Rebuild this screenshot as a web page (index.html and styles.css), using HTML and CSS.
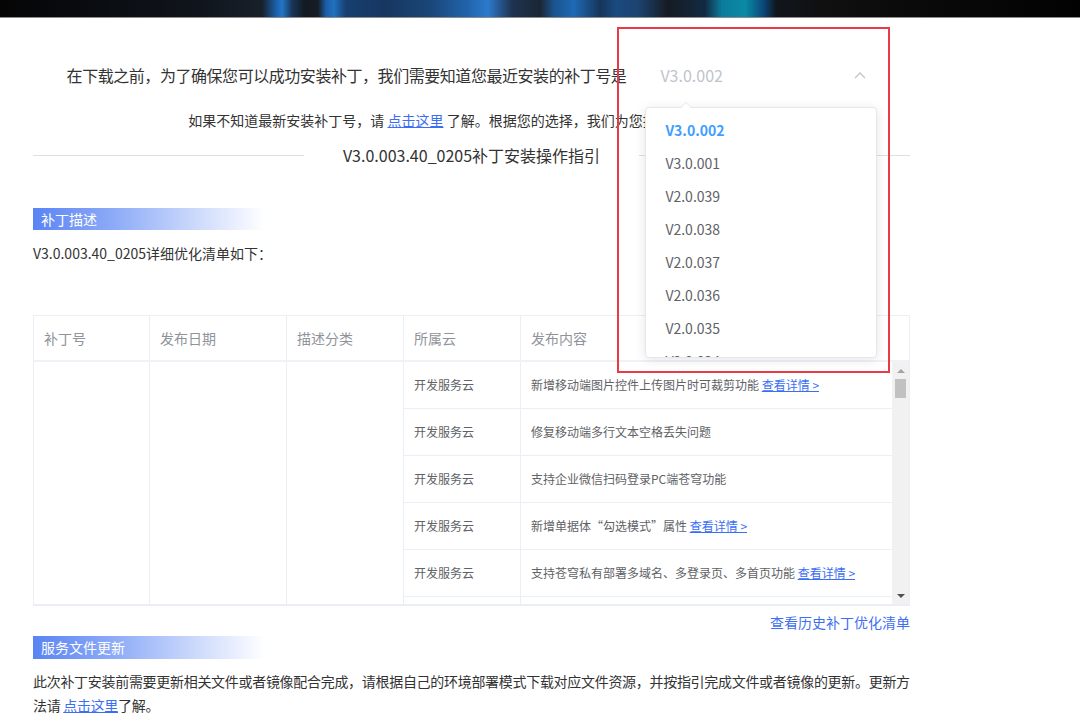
FILE: index.html
```html
<!DOCTYPE html>
<html lang="zh-CN">
<head>
<meta charset="utf-8">
<title>补丁安装操作指引</title>
<link rel="stylesheet" href="styles.css">
</head>
<body>
<div class="banner"></div>
<main class="page">
  <div class="ask">
    <span class="ask-text">在下载之前，为了确保您可以成功安装补丁，我们需要知道您最近安装的补丁号是</span>
    <div class="select">
      <span class="select-value">V3.0.002</span>
      <svg class="chev" width="12" height="8" viewBox="0 0 12 8"><path d="M1 7 L6 2 L11 7" fill="none" stroke="#c0c4cc" stroke-width="1.3"/></svg>
      <div class="popup">
        <span class="popup-arrow"></span>
        <div class="popup-wrap">
          <ul class="popup-list">
            <li class="opt opt-active">V3.0.002</li>
            <li class="opt">V3.0.001</li>
            <li class="opt">V2.0.039</li>
            <li class="opt">V2.0.038</li>
            <li class="opt">V2.0.037</li>
            <li class="opt">V2.0.036</li>
            <li class="opt">V2.0.035</li>
            <li class="opt">V2.0.034</li>
            <li class="opt">V2.0.033</li>
          </ul>
        </div>
      </div>
      <div class="annot"></div>
    </div>
  </div>
  <p class="hint">如果不知道最新安装补丁号，请 <a class="link">点击这里</a> 了解。根据您的选择，我们为您提供对应的指引。</p>
  <div class="divider">
    <span class="divider-line"></span>
    <span class="divider-text">V3.0.003.40_0205补丁安装操作指引</span>
    <span class="divider-line"></span>
  </div>
  <div class="sec-bar sec-first">补丁描述</div>
  <p class="desc">V3.0.003.40_0205详细优化清单如下：</p>

  <div class="table">
    <div class="thead">
      <div class="th">补丁号</div>
      <div class="th">发布日期</div>
      <div class="th">描述分类</div>
      <div class="th">所属云</div>
      <div class="th th-last">发布内容</div>
    </div>
    <div class="tbody-wrap">
      <div class="tbody">
        <div class="td td-merged c1"></div>
        <div class="td td-merged c2"></div>
        <div class="td td-merged c3"></div>
        <div class="td">开发服务云</div>
        <div class="td td-last">新增移动端图片控件上传图片时可裁剪功能 <a class="link">查看详情 &gt;</a></div>
        <div class="td">开发服务云</div>
        <div class="td td-last">修复移动端多行文本空格丢失问题</div>
        <div class="td">开发服务云</div>
        <div class="td td-last">支持企业微信扫码登录PC端苍穹功能</div>
        <div class="td">开发服务云</div>
        <div class="td td-last">新增单据体“勾选模式”属性 <a class="link">查看详情 &gt;</a></div>
        <div class="td">开发服务云</div>
        <div class="td td-last">支持苍穹私有部署多域名、多登录页、多首页功能 <a class="link">查看详情 &gt;</a></div>
        <div class="td td-empty"></div>
        <div class="td td-last td-empty"></div>
      </div>
      <div class="scrollbar">
        <span class="sb-btn"><span class="tri-up"></span></span>
        <span class="sb-thumb"></span>
        <span class="sb-space"></span>
        <span class="sb-btn"><span class="tri-down"></span></span>
      </div>
    </div>
  </div>

  <div class="history"><a class="link">查看历史补丁优化清单</a></div>
  <div class="sec-bar sec-second">服务文件更新</div>
  <p class="para">此次补丁安装前需要更新相关文件或者镜像配合完成，请根据自己的环境部署模式下载对应文件资源，并按指引完成文件或者镜像的更新。更新方法请 <a class="link">点击这里</a>了解。</p>
</main>
</body>
</html>
```

FILE: styles.css
```css
* { box-sizing: border-box; }
html, body { margin: 0; padding: 0; background: #fff; }
body {
  font-family: "Noto Sans CJK SC", "Noto Sans", sans-serif;
  color: #333;
  width: 1080px;
  height: 717px;
  overflow: hidden;
}
p { margin: 0; }
ul { margin: 0; padding: 0; list-style: none; }

.banner {
  height: 18px;
  border-bottom: 1px solid #8d8d8d;
  background:
    linear-gradient(90deg,
      #050505 0px, #080a0e 70px, #10151c 200px, #18202b 262px,
      #1a5fa8 276px, #2476c8 282px, #18365a 292px, #141920 305px,
      #171d25 318px, #1b5ea8 326px, #2170c0 334px, #173f70 346px,
      #173761 385px, #1a4678 430px, #2164ad 468px, #2c7acb 488px,
      #1e3350 512px, #1b2634 540px, #1b548f 554px, #1f69b4 574px,
      #17355a 600px, #1a4a80 616px, #1d4370 638px, #161b23 668px,
      #132a42 705px, #0c7d9c 722px, #0a8aa6 745px, #0b4677 764px,
      #11161d 776px, #101010 820px, #090909 930px, #020202 1080px);
}

.page {
  width: 877px;
  margin: 0 0 0 33px;
  position: relative;
}

/* question row */
.ask {
  display: flex;
  justify-content: center;
  align-items: center;
  gap: 24px;
  margin-top: 37px;
  height: 40px;
}
.ask-text {
  font-size: 16px;
  line-height: 40px;
  letter-spacing: -0.45px;
  color: #333;
  white-space: nowrap;
}
.select {
  position: relative;
  width: 226px;
  height: 40px;
  display: flex;
  align-items: center;
  justify-content: space-between;
  padding: 0 10px 0 10px;
}
.select-value {
  font-size: 16px;
  line-height: 40px;
  color: #c0c4cc;
}

.popup {
  position: absolute;
  left: -5px;
  top: 52px;
  width: 232px;
  height: 251px;
  background: #fff;
  border: 1px solid #e4e7ed;
  border-radius: 4px;
  box-shadow: 0 2px 12px rgba(0, 0, 0, 0.1);
  z-index: 5;
}
.popup-arrow {
  position: absolute;
  top: -6px;
  left: 34px;
  width: 0; height: 0;
  border-left: 6px solid transparent;
  border-right: 6px solid transparent;
  border-bottom: 6px solid #e4e7ed;
}
.popup-arrow::after {
  content: "";
  position: absolute;
  left: -6px;
  top: 1px;
  border-left: 6px solid transparent;
  border-right: 6px solid transparent;
  border-bottom: 6px solid #fff;
}
.popup-wrap {
  height: 249px;
  overflow: hidden;
  border-radius: 4px;
}
.popup-list { padding-top: 6px; }
.opt {
  height: 33px;
  line-height: 33px;
  padding: 0 19px;
  font-size: 14px;
  color: #606266;
}
.opt-active { color: #409eff; font-weight: 700; }

.annot {
  position: absolute;
  left: -33px;
  top: -28px;
  width: 273px;
  height: 346px;
  border: 2px solid #ea3a45;
  z-index: 6;
  pointer-events: none;
}

.link { color: #3b6ef5; text-decoration: underline; cursor: pointer; }

.hint {
  margin-top: 15px;
  text-align: center;
  font-size: 14px;
  line-height: 20px;
  color: #333;
}

.divider {
  display: flex;
  align-items: center;
  margin-top: 13px;
  height: 24px;
}
.divider-line { flex: 1; height: 1px; background: #dcdfe6; }
.divider-text {
  margin: 0 39px;
  font-size: 16px;
  line-height: 24px;
  color: #333;
  white-space: nowrap;
}

.sec-bar {
  width: 232px;
  height: 22px;
  line-height: 22px;
  padding-left: 8px;
  font-size: 14px;
  color: #fff;
  background: linear-gradient(90deg, #5a84f4 0%, #8eabf7 35%, #cbd9fb 70%, rgba(255,255,255,0) 100%);
}
.sec-first { margin-top: 41px; }
.sec-second { margin-top: 4px; height: 23px; line-height: 23px; }

.desc {
  margin-top: 13px;
  font-size: 14px;
  line-height: 20px;
  color: #333;
}

/* table */
.table {
  margin-top: 52px;
  border: 1px solid #ebeef5;
  border-bottom-width: 2px;
}
.thead {
  display: grid;
  grid-template-columns: 116px 137px 117px 117px 1fr;
  height: 46px;
  border-bottom: 2px solid #f1f2f7;
}
.th {
  border-right: 1px solid #ebeef5;
  padding-left: 10px;
  font-size: 14px;
  line-height: 44px;
  color: #909399;
}
.th-last { border-right: none; }
.tbody-wrap {
  display: flex;
  height: 242px;
  overflow: hidden;
}
.tbody {
  flex: 1;
  display: grid;
  grid-template-columns: 116px 137px 117px 117px 1fr;
  grid-auto-rows: 47px;
  align-self: flex-start;
}
.td {
  border-right: 1px solid #ebeef5;
  border-bottom: 1px solid #ebeef5;
  padding-left: 10px;
  font-size: 12px;
  line-height: 46px;
  color: #606266;
  white-space: nowrap;
}
.td-last { border-right: none; }
.td-merged { grid-row: 1 / span 6; }
.c1 { grid-column: 1; }
.c2 { grid-column: 2; }
.c3 { grid-column: 3; }

.scrollbar {
  width: 17px;
  background: #f1f1f1;
  display: flex;
  flex-direction: column;
  align-items: center;
}
.sb-btn {
  height: 17px;
  width: 17px;
  display: flex;
  align-items: center;
  justify-content: center;
}
.tri-up {
  border-left: 4px solid transparent;
  border-right: 4px solid transparent;
  border-bottom: 4px solid #a3a3a3;
}
.tri-down {
  border-left: 4px solid transparent;
  border-right: 4px solid transparent;
  border-top: 4px solid #505050;
}
.sb-thumb {
  width: 11px;
  height: 19px;
  background: #c1c1c1;
}
.sb-space { flex: 1; }

.history {
  margin-top: 6px;
  text-align: right;
  font-size: 14px;
  line-height: 20px;
}
.history .link { text-decoration: none; color: #3f6ff0; }

.para {
  margin-top: 10px;
  font-size: 14px;
  line-height: 24px;
  letter-spacing: -0.3px;
  color: #333;
}
```
